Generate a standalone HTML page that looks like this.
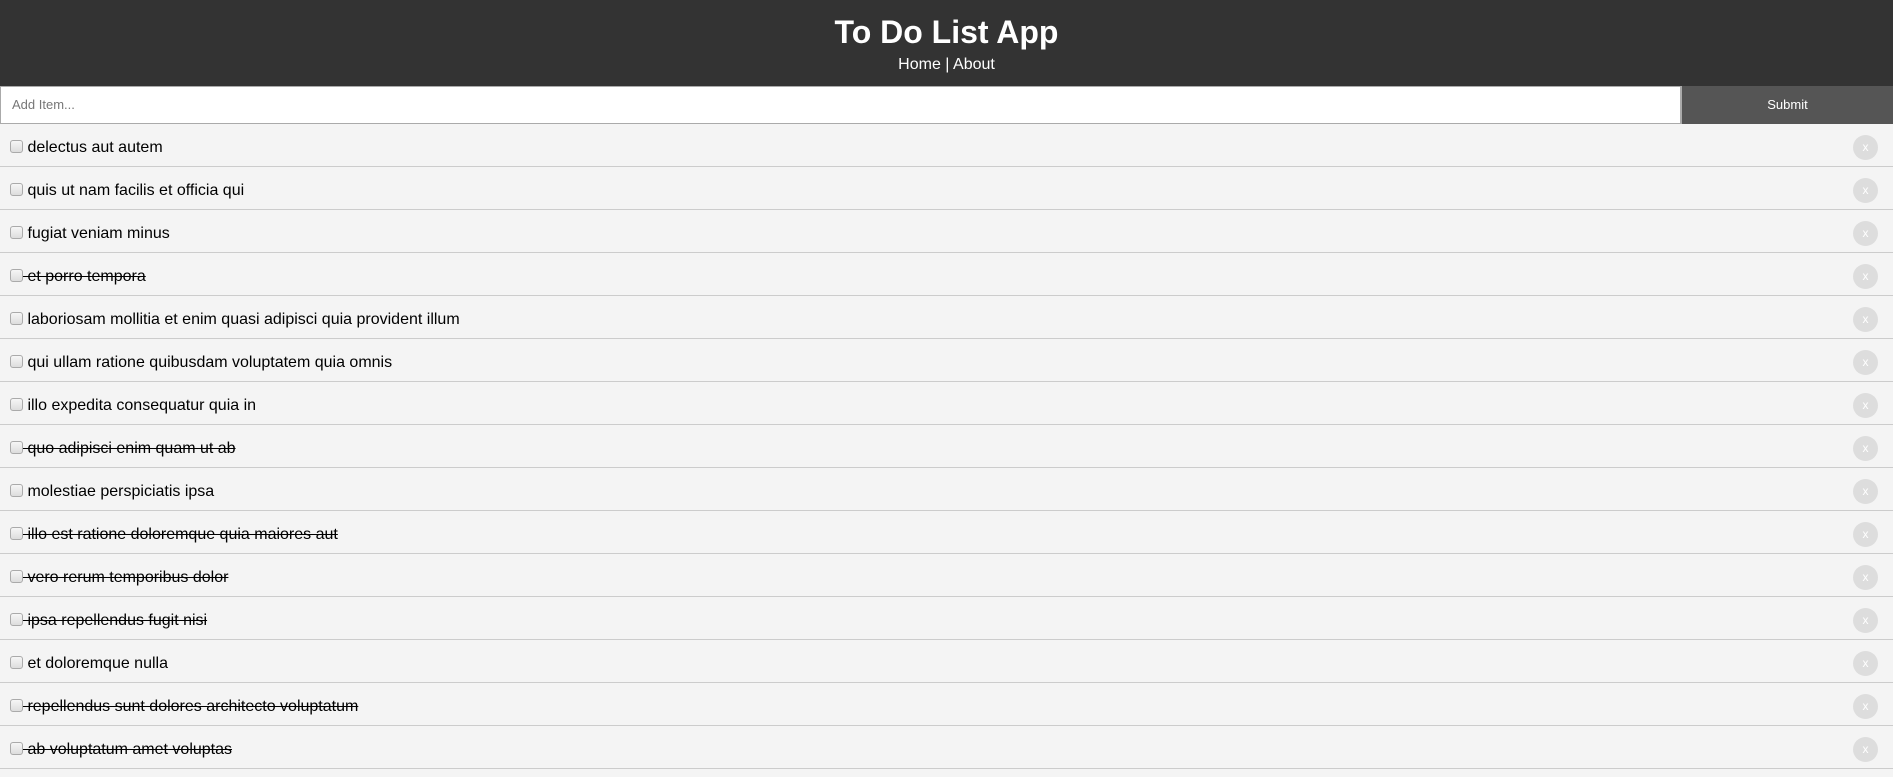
<!DOCTYPE html>
<html><head><meta charset="utf-8"><style>
*{box-sizing:border-box;margin:0;padding:0}
body{width:1893px;height:777px;overflow:hidden;background:#f4f4f4;font-family:"Liberation Sans",Arial,sans-serif}
header{height:86px;background:#333;color:#fff;text-align:center;padding-top:13px}
h1{font-size:32px;font-weight:bold;line-height:38px}
nav{font-size:16px;line-height:20px;margin-top:4px}
form{display:flex;height:38px}
.in{flex:1;border:1px solid #aaa;border-right:2px solid #aaa;background:#fff;font-size:13px;color:#777;padding:0 11px;line-height:36px}
.sub{width:211px;background:#555;color:#fff;font-size:13px;text-align:center;line-height:38px}
.li{height:43px;border-bottom:1px solid #ccc;background:#f4f4f4;position:relative;font-size:16px;line-height:42px;padding-left:10px;padding-top:3px;color:#000}
.cb{display:inline-block;width:13px;height:13px;border:1px solid #aaa;border-radius:3px;background:linear-gradient(#f6f6f6,#ddd);vertical-align:-1px}
.s{text-decoration:line-through}
.x{position:absolute;right:15px;top:11px;width:25px;height:25px;border-radius:50%;background:#ddd;color:#fff;font-size:12px;line-height:25px;text-align:center}
</style></head><body>
<header><h1>To Do List App</h1><nav>Home | About</nav></header>
<form><div class="in">Add Item...</div><div class="sub">Submit</div></form>
<div class="li"><span class="cb"></span> delectus aut autem<span class="x">x</span></div>
<div class="li"><span class="cb"></span> quis ut nam facilis et officia qui<span class="x">x</span></div>
<div class="li"><span class="cb"></span> fugiat veniam minus<span class="x">x</span></div>
<div class="li s"><span class="cb"></span> et porro tempora<span class="x">x</span></div>
<div class="li"><span class="cb"></span> laboriosam mollitia et enim quasi adipisci quia provident illum<span class="x">x</span></div>
<div class="li"><span class="cb"></span> qui ullam ratione quibusdam voluptatem quia omnis<span class="x">x</span></div>
<div class="li"><span class="cb"></span> illo expedita consequatur quia in<span class="x">x</span></div>
<div class="li s"><span class="cb"></span> quo adipisci enim quam ut ab<span class="x">x</span></div>
<div class="li"><span class="cb"></span> molestiae perspiciatis ipsa<span class="x">x</span></div>
<div class="li s"><span class="cb"></span> illo est ratione doloremque quia maiores aut<span class="x">x</span></div>
<div class="li s"><span class="cb"></span> vero rerum temporibus dolor<span class="x">x</span></div>
<div class="li s"><span class="cb"></span> ipsa repellendus fugit nisi<span class="x">x</span></div>
<div class="li"><span class="cb"></span> et doloremque nulla<span class="x">x</span></div>
<div class="li s"><span class="cb"></span> repellendus sunt dolores architecto voluptatum<span class="x">x</span></div>
<div class="li s"><span class="cb"></span> ab voluptatum amet voluptas<span class="x">x</span></div>
</body></html>
